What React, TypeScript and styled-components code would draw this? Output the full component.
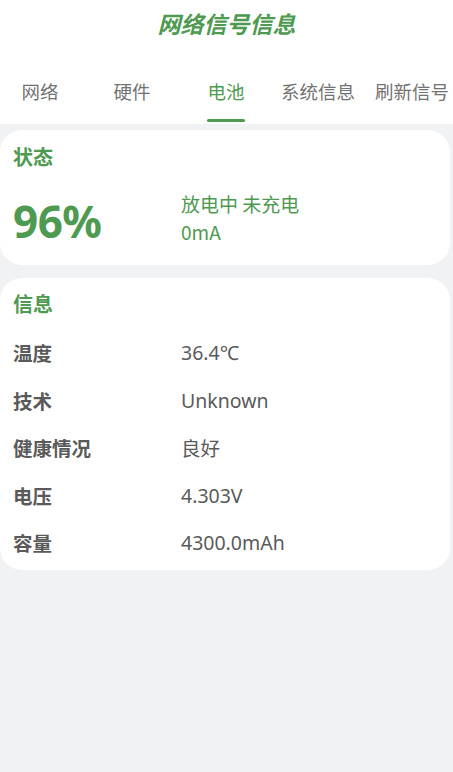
import { Fragment } from 'react';
import styled, { createGlobalStyle } from 'styled-components';

const GlobalStyle = createGlobalStyle`
  html, body {
    margin: 0;
    padding: 0;
    background: #f1f2f4;
  }
  body {
    font-family: "Noto Sans", "Noto Sans CJK SC", sans-serif;
  }
`;

const GREEN = '#4e9a51';
const GRAY = '#5a5a5a';

const Page = styled.div`
  width: 453px;
  min-height: 772px;
  background: #f1f2f4;
`;

const Header = styled.header`
  background: #ffffff;
  height: 124px;
  display: flex;
  flex-direction: column;
`;

const Title = styled.h1`
  margin: 0;
  height: 46px;
  display: flex;
  align-items: center;
  justify-content: center;
  font-size: 23px;
  font-weight: 700;
  font-style: italic;
  color: ${GREEN};
  font-family: "Noto Sans CJK SC", sans-serif;
`;

const TabBar = styled.nav`
  margin-top: 26px;
  display: flex;
  height: 52px;
`;

const Tab = styled.div<{ $width: number; $active?: boolean }>`
  width: ${({ $width }) => $width}px;
  flex-shrink: 0;
  display: flex;
  flex-direction: column;
  align-items: center;
  font-family: "Noto Sans CJK SC", sans-serif;
  font-size: 18.5px;
  color: ${({ $active }) => ($active ? GREEN : '#727272')};
  line-height: 38px;

  &::after {
    content: '';
    display: block;
    margin-top: 9px;
    width: 38px;
    height: 3px;
    border-radius: 2px;
    background: ${({ $active }) => ($active ? GREEN : 'transparent')};
  }
`;

const Content = styled.main`
  padding: 6px 3px 0 0;
  display: flex;
  flex-direction: column;
  gap: 13px;
`;

const Card = styled.section`
  background: #ffffff;
  border-radius: 22px;
  padding: 12px 13px;
`;

const InfoCard = styled(Card)`
  padding-top: 11px;
  padding-bottom: 3px;
`;

const CardTitle = styled.h2`
  margin: 0;
  font-family: "Noto Sans CJK SC", sans-serif;
  font-size: 20px;
  font-weight: 700;
  line-height: 30px;
  color: ${GREEN};
`;

const StatusRow = styled.div`
  display: grid;
  grid-template-columns: 168px 1fr;
  align-items: center;
  margin-top: 18px;
  padding-bottom: 7px;
`;

const Percent = styled.div`
  font-family: "Noto Sans", sans-serif;
  font-size: 44px;
  font-weight: 700;
  letter-spacing: -0.5px;
  color: ${GREEN};
  line-height: 50px;
  padding-top: 6px;
`;

const StatusText = styled.div`
  font-family: "Noto Sans CJK SC", sans-serif;
  font-size: 19px;
  line-height: 28px;
  color: ${GREEN};
`;

const InfoList = styled.div`
  display: grid;
  grid-template-columns: 168px 1fr;
  grid-auto-rows: 47.5px;
  align-items: center;
  margin-top: 10px;
`;

const Label = styled.div`
  font-family: "Noto Sans CJK SC", sans-serif;
  font-size: 19.5px;
  font-weight: 700;
  color: ${GRAY};
`;

const Value = styled.div`
  font-family: "Noto Sans", "Noto Sans CJK SC", sans-serif;
  font-size: 19.5px;
  color: ${GRAY};
`;

const tabs = [
  { name: '网络', width: 80 },
  { name: '硬件', width: 104 },
  { name: '电池', width: 84, active: true },
  { name: '系统信息', width: 100 },
  { name: '刷新信号', width: 88 },
];

const info = [
  ['温度', '36.4℃'],
  ['技术', 'Unknown'],
  ['健康情况', '良好'],
  ['电压', '4.303V'],
  ['容量', '4300.0mAh'],
];

const App = () => {
  return (
    <Page>
      <GlobalStyle />
      <Header>
        <Title>网络信号信息</Title>
        <TabBar>
          {tabs.map((t) => (
            <Tab key={t.name} $width={t.width} $active={t.active}>
              {t.name}
            </Tab>
          ))}
        </TabBar>
      </Header>
      <Content>
        <Card>
          <CardTitle>状态</CardTitle>
          <StatusRow>
            <Percent>96%</Percent>
            <StatusText>
              放电中 未充电
              <br />
              0mA
            </StatusText>
          </StatusRow>
        </Card>
        <InfoCard>
          <CardTitle>信息</CardTitle>
          <InfoList>
            {info.map(([label, value]) => (
              <Fragment key={label}>
                <Label>{label}</Label>
                <Value>{value}</Value>
              </Fragment>
            ))}
          </InfoList>
        </InfoCard>
      </Content>
    </Page>
  );
};

export default App;
